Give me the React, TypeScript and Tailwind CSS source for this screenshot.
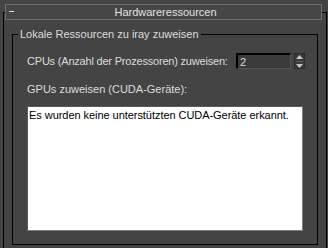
import React from "react";

export default function App() {
  return (
    <div
      className="w-[328px] h-[248px] bg-[#444444] overflow-hidden pt-[4px] text-[11px] text-[#dcdcdc] whitespace-nowrap"
      style={{ fontFamily: '"Liberation Sans", Arial, sans-serif' }}
    >
      {/* Rollout header */}
      <div className="relative z-10 ml-[5px] w-[317px] h-[16px] border border-[#6e6e6e] bg-[#464646] flex items-center">
        <span className="absolute left-[3px] top-[6px] w-[5px] h-[1px] bg-[#e0e0e0]" />
        <span className="flex-1 text-center leading-[14px] text-[#e2e2e2] pl-[4px]">Hardwareressourcen</span>
      </div>
      {/* Rollout frame */}
      <div className="-mt-[8px] ml-[3px] w-[324px] h-[260px] border border-black border-b-0 pt-[21px] pl-[8px]">
        {/* Group box */}
        <div className="relative w-[306px] h-[211px] border border-black pt-[18px] pl-[14px]">
          <span className="absolute left-[5px] -top-[8px] px-[2px] bg-[#444444] leading-[14px]">
            Lokale Ressourcen zu iray zuweisen
          </span>
          <div className="flex items-center h-[16px]">
            <span className="leading-[14px] w-[209px] shrink-0 tracking-[-0.2px]">CPUs (Anzahl der Prozessoren) zuweisen:</span>
            <div className="w-[55px] h-[16px] shrink-0 bg-[#3b3b3b] border-t-2 border-l-2 border-black border-r border-b border-r-[#555] border-b-[#555] flex items-center pl-[2px] leading-[12px] text-[#dcdcdc]">
              2
            </div>
            <div className="ml-[3px] w-[11px] h-[16px] shrink-0 bg-[#3a3a3a] border border-[#2c2c2c] flex flex-col items-center justify-center gap-[2px]">
              <svg width="7" height="4" viewBox="0 0 7 4"><path d="M3.5 0 L7 4 L0 4 Z" fill="#c8c8c8" /></svg>
              <div className="w-[7px] h-[1px] bg-[#5a5a5a]" />
              <svg width="7" height="4" viewBox="0 0 7 4"><path d="M0 0 L7 0 L3.5 4 Z" fill="#c8c8c8" /></svg>
            </div>
          </div>
          <div className="mt-[13px] h-[14px] leading-[14px]">GPUs zuweisen (CUDA-Geräte):</div>
          <div className="mt-[10px] w-[276px] h-[125px] bg-white border border-[#7a8088] border-t-[#5a5a5a] border-l-[#5a5a5a] text-black pl-[1px] pt-[1px] leading-[14px] tracking-[-0.05px]">
            Es wurden keine unterstützten CUDA-Geräte erkannt.
          </div>
        </div>
      </div>
    </div>
  );
}
